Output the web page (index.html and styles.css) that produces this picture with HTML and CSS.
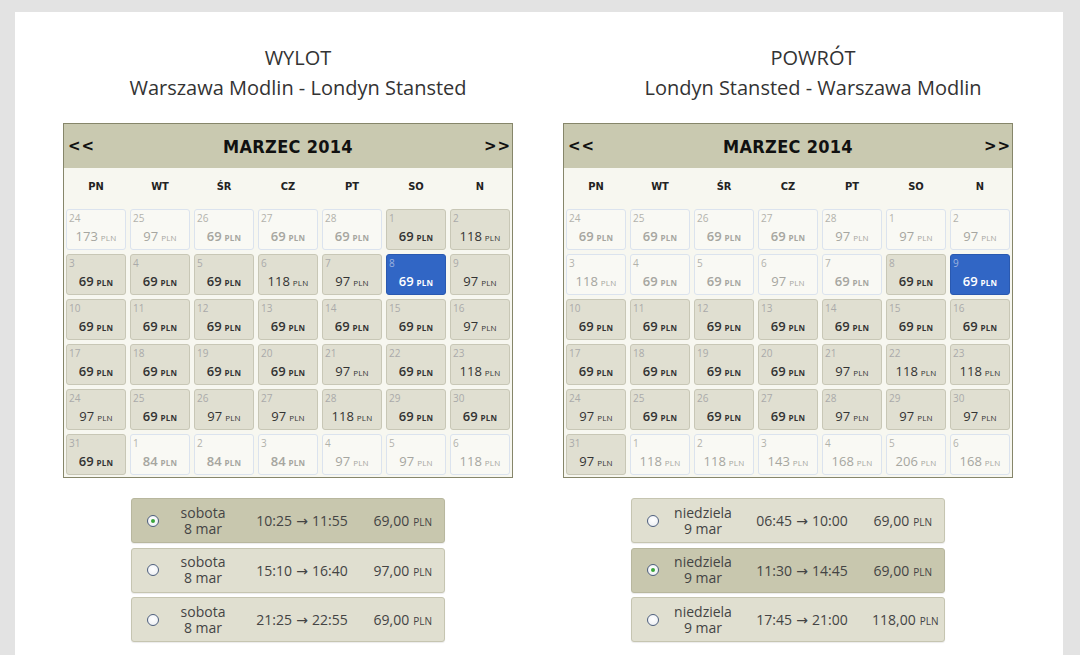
FILE: index.html
```html
<!DOCTYPE html>
<html lang="pl">
<head>
<meta charset="utf-8">
<title>Wybór lotu</title>
<link rel="stylesheet" href="styles.css">
</head>
<body>
<div class="panel">
  <div class="cols">
    <section class="col col-out">
      <h2 class="title">WYLOT<br>Warszawa Modlin - Londyn Stansted</h2>
      <div class="cal">
        <div class="cal-head"><span class="nav">&lt;&lt;</span><span class="month">MARZEC 2014</span><span class="nav">&gt;&gt;</span></div>
        <div class="wk"><span>PN</span><span>WT</span><span>ŚR</span><span>CZ</span><span>PT</span><span>SO</span><span>N</span></div>
        <div class="grid">
          <div class="d off"><span class="n">24</span><span class="p">173<small>PLN</small></span></div>
          <div class="d off"><span class="n">25</span><span class="p">97<small>PLN</small></span></div>
          <div class="d off b"><span class="n">26</span><span class="p">69<small>PLN</small></span></div>
          <div class="d off b"><span class="n">27</span><span class="p">69<small>PLN</small></span></div>
          <div class="d off b"><span class="n">28</span><span class="p">69<small>PLN</small></span></div>
          <div class="d b"><span class="n">1</span><span class="p">69<small>PLN</small></span></div>
          <div class="d"><span class="n">2</span><span class="p">118<small>PLN</small></span></div>

          <div class="d b"><span class="n">3</span><span class="p">69<small>PLN</small></span></div>
          <div class="d b"><span class="n">4</span><span class="p">69<small>PLN</small></span></div>
          <div class="d b"><span class="n">5</span><span class="p">69<small>PLN</small></span></div>
          <div class="d"><span class="n">6</span><span class="p">118<small>PLN</small></span></div>
          <div class="d"><span class="n">7</span><span class="p">97<small>PLN</small></span></div>
          <div class="d sel b"><span class="n">8</span><span class="p">69<small>PLN</small></span></div>
          <div class="d"><span class="n">9</span><span class="p">97<small>PLN</small></span></div>

          <div class="d b"><span class="n">10</span><span class="p">69<small>PLN</small></span></div>
          <div class="d b"><span class="n">11</span><span class="p">69<small>PLN</small></span></div>
          <div class="d b"><span class="n">12</span><span class="p">69<small>PLN</small></span></div>
          <div class="d b"><span class="n">13</span><span class="p">69<small>PLN</small></span></div>
          <div class="d b"><span class="n">14</span><span class="p">69<small>PLN</small></span></div>
          <div class="d b"><span class="n">15</span><span class="p">69<small>PLN</small></span></div>
          <div class="d"><span class="n">16</span><span class="p">97<small>PLN</small></span></div>

          <div class="d b"><span class="n">17</span><span class="p">69<small>PLN</small></span></div>
          <div class="d b"><span class="n">18</span><span class="p">69<small>PLN</small></span></div>
          <div class="d b"><span class="n">19</span><span class="p">69<small>PLN</small></span></div>
          <div class="d b"><span class="n">20</span><span class="p">69<small>PLN</small></span></div>
          <div class="d"><span class="n">21</span><span class="p">97<small>PLN</small></span></div>
          <div class="d b"><span class="n">22</span><span class="p">69<small>PLN</small></span></div>
          <div class="d"><span class="n">23</span><span class="p">118<small>PLN</small></span></div>

          <div class="d"><span class="n">24</span><span class="p">97<small>PLN</small></span></div>
          <div class="d b"><span class="n">25</span><span class="p">69<small>PLN</small></span></div>
          <div class="d"><span class="n">26</span><span class="p">97<small>PLN</small></span></div>
          <div class="d"><span class="n">27</span><span class="p">97<small>PLN</small></span></div>
          <div class="d"><span class="n">28</span><span class="p">118<small>PLN</small></span></div>
          <div class="d b"><span class="n">29</span><span class="p">69<small>PLN</small></span></div>
          <div class="d b"><span class="n">30</span><span class="p">69<small>PLN</small></span></div>

          <div class="d b"><span class="n">31</span><span class="p">69<small>PLN</small></span></div>
          <div class="d off b"><span class="n">1</span><span class="p">84<small>PLN</small></span></div>
          <div class="d off b"><span class="n">2</span><span class="p">84<small>PLN</small></span></div>
          <div class="d off b"><span class="n">3</span><span class="p">84<small>PLN</small></span></div>
          <div class="d off"><span class="n">4</span><span class="p">97<small>PLN</small></span></div>
          <div class="d off"><span class="n">5</span><span class="p">97<small>PLN</small></span></div>
          <div class="d off"><span class="n">6</span><span class="p">118<small>PLN</small></span></div>
        </div>
      </div>
      <div class="flights">
        <div class="fl active"><span class="radio on"></span><span class="day"><span class="ln">sobota</span><span class="ln">8 mar</span></span><span class="time">10:25 → 11:55</span><span class="price">69,00<small>PLN</small></span></div>
        <div class="fl"><span class="radio"></span><span class="day"><span class="ln">sobota</span><span class="ln">8 mar</span></span><span class="time">15:10 → 16:40</span><span class="price">97,00<small>PLN</small></span></div>
        <div class="fl"><span class="radio"></span><span class="day"><span class="ln">sobota</span><span class="ln">8 mar</span></span><span class="time">21:25 → 22:55</span><span class="price">69,00<small>PLN</small></span></div>
      </div>
    </section>

    <section class="col col-ret">
      <h2 class="title">POWRÓT<br>Londyn Stansted - Warszawa Modlin</h2>
      <div class="cal">
        <div class="cal-head"><span class="nav">&lt;&lt;</span><span class="month">MARZEC 2014</span><span class="nav">&gt;&gt;</span></div>
        <div class="wk"><span>PN</span><span>WT</span><span>ŚR</span><span>CZ</span><span>PT</span><span>SO</span><span>N</span></div>
        <div class="grid">
          <div class="d off b"><span class="n">24</span><span class="p">69<small>PLN</small></span></div>
          <div class="d off b"><span class="n">25</span><span class="p">69<small>PLN</small></span></div>
          <div class="d off b"><span class="n">26</span><span class="p">69<small>PLN</small></span></div>
          <div class="d off b"><span class="n">27</span><span class="p">69<small>PLN</small></span></div>
          <div class="d off"><span class="n">28</span><span class="p">97<small>PLN</small></span></div>
          <div class="d off"><span class="n">1</span><span class="p">97<small>PLN</small></span></div>
          <div class="d off"><span class="n">2</span><span class="p">97<small>PLN</small></span></div>

          <div class="d off"><span class="n">3</span><span class="p">118<small>PLN</small></span></div>
          <div class="d off b"><span class="n">4</span><span class="p">69<small>PLN</small></span></div>
          <div class="d off b"><span class="n">5</span><span class="p">69<small>PLN</small></span></div>
          <div class="d off"><span class="n">6</span><span class="p">97<small>PLN</small></span></div>
          <div class="d off b"><span class="n">7</span><span class="p">69<small>PLN</small></span></div>
          <div class="d b"><span class="n">8</span><span class="p">69<small>PLN</small></span></div>
          <div class="d sel b"><span class="n">9</span><span class="p">69<small>PLN</small></span></div>

          <div class="d b"><span class="n">10</span><span class="p">69<small>PLN</small></span></div>
          <div class="d b"><span class="n">11</span><span class="p">69<small>PLN</small></span></div>
          <div class="d b"><span class="n">12</span><span class="p">69<small>PLN</small></span></div>
          <div class="d b"><span class="n">13</span><span class="p">69<small>PLN</small></span></div>
          <div class="d b"><span class="n">14</span><span class="p">69<small>PLN</small></span></div>
          <div class="d b"><span class="n">15</span><span class="p">69<small>PLN</small></span></div>
          <div class="d b"><span class="n">16</span><span class="p">69<small>PLN</small></span></div>

          <div class="d b"><span class="n">17</span><span class="p">69<small>PLN</small></span></div>
          <div class="d b"><span class="n">18</span><span class="p">69<small>PLN</small></span></div>
          <div class="d b"><span class="n">19</span><span class="p">69<small>PLN</small></span></div>
          <div class="d b"><span class="n">20</span><span class="p">69<small>PLN</small></span></div>
          <div class="d"><span class="n">21</span><span class="p">97<small>PLN</small></span></div>
          <div class="d"><span class="n">22</span><span class="p">118<small>PLN</small></span></div>
          <div class="d"><span class="n">23</span><span class="p">118<small>PLN</small></span></div>

          <div class="d"><span class="n">24</span><span class="p">97<small>PLN</small></span></div>
          <div class="d b"><span class="n">25</span><span class="p">69<small>PLN</small></span></div>
          <div class="d b"><span class="n">26</span><span class="p">69<small>PLN</small></span></div>
          <div class="d b"><span class="n">27</span><span class="p">69<small>PLN</small></span></div>
          <div class="d"><span class="n">28</span><span class="p">97<small>PLN</small></span></div>
          <div class="d"><span class="n">29</span><span class="p">97<small>PLN</small></span></div>
          <div class="d"><span class="n">30</span><span class="p">97<small>PLN</small></span></div>

          <div class="d"><span class="n">31</span><span class="p">97<small>PLN</small></span></div>
          <div class="d off"><span class="n">1</span><span class="p">118<small>PLN</small></span></div>
          <div class="d off"><span class="n">2</span><span class="p">118<small>PLN</small></span></div>
          <div class="d off"><span class="n">3</span><span class="p">143<small>PLN</small></span></div>
          <div class="d off"><span class="n">4</span><span class="p">168<small>PLN</small></span></div>
          <div class="d off"><span class="n">5</span><span class="p">206<small>PLN</small></span></div>
          <div class="d off"><span class="n">6</span><span class="p">168<small>PLN</small></span></div>
        </div>
      </div>
      <div class="flights">
        <div class="fl"><span class="radio"></span><span class="day"><span class="ln">niedziela</span><span class="ln">9 mar</span></span><span class="time">06:45 → 10:00</span><span class="price">69,00<small>PLN</small></span></div>
        <div class="fl active"><span class="radio on"></span><span class="day"><span class="ln">niedziela</span><span class="ln">9 mar</span></span><span class="time">11:30 → 14:45</span><span class="price">69,00<small>PLN</small></span></div>
        <div class="fl"><span class="radio"></span><span class="day"><span class="ln">niedziela</span><span class="ln">9 mar</span></span><span class="time">17:45 → 21:00</span><span class="price">118,00<small>PLN</small></span></div>
      </div>
    </section>
  </div>
</div>
</body>
</html>
```

FILE: styles.css
```css
html, body {
  margin: 0;
  padding: 0;
  background: #e3e3e3;
  height: 100%;
  overflow: hidden;
}

body {
  font-family: "Open Sans", "DejaVu Sans", sans-serif;
  color: #333;
}

.panel {
  margin: 12px 0 0 15px;
  width: 1048px;
  min-height: 700px;
  background: #fff;
  box-sizing: border-box;
  padding: 31px 0 0 48px;
}

.cols {
  display: flex;
  gap: 30px;
}

.col-out { width: 470px; }
.col-ret { width: 500px; }

.title {
  margin: 0 0 20px;
  font-size: 20px;
  line-height: 30px;
  font-weight: normal;
  text-align: center;
  color: #333;
}

.cal {
  width: 450px;
  border: 1px solid #86866a;
  background: #f7f7f0;
  box-sizing: border-box;
}

.cal-head {
  height: 44px;
  background: #c9c9b0;
  display: flex;
  align-items: center;
  justify-content: space-between;
  padding: 0 4px 0 4px;
  font-family: "DejaVu Sans", "Liberation Sans", sans-serif;
  font-weight: bold;
  color: #111;
}

.nav {
  font-size: 15px;
  letter-spacing: 1px;
  width: 24px;
}
.nav:last-child { text-align: right; }

.month {
  font-size: 18px;
  font-stretch: condensed;
  letter-spacing: 0.3px;
}

.wk {
  display: grid;
  grid-template-columns: repeat(7, 60px);
  column-gap: 4px;
  padding: 0 2px;
  height: 37px;
  align-items: center;
  margin-bottom: 4px;
  font-family: "DejaVu Sans", "Liberation Sans", sans-serif;
  font-stretch: condensed;
  font-weight: bold;
  font-size: 11px;
  color: #222;
  text-align: center;
}

.grid {
  display: grid;
  grid-template-columns: repeat(7, 60px);
  grid-auto-rows: 41px;
  gap: 4px;
  padding: 0 2px 2px;
}

.d {
  box-sizing: border-box;
  border: 1px solid #c8c7b6;
  border-radius: 3px;
  background: #e0dfd1;
  color: #333;
  text-align: center;
}

.d.off {
  background: #f9f9f4;
  border-color: #dbe3ee;
  color: #a6a6a0;
}

.d.sel {
  background: #3166c5;
  border-color: #2a59b0;
  color: #fff;
}

.n {
  display: block;
  text-align: left;
  font-size: 10px;
  line-height: 12px;
  padding: 2px 0 0 2px;
  color: #aaa;
}
.d.sel .n { color: #9db3de; }
.d.off .n { color: #b2b2ac; }

.p {
  display: block;
  margin-top: 4px;
  font-size: 13px;
  line-height: 16px;
}
.p small {
  font-size: 8px;
  margin-left: 3px;
  font-weight: normal;
  letter-spacing: 0.2px;
}
.d.b .p { font-weight: 600; }
.d.b .p small { font-weight: 700; }

.flights {
  width: 450px;
  margin-top: 20px;
  display: flex;
  flex-direction: column;
  align-items: center;
  gap: 4.5px;
}

.fl {
  box-sizing: border-box;
  width: 314px;
  height: 45px;
  border: 1px solid #c6c5b1;
  border-radius: 3px;
  background: #e0dfd0;
  display: grid;
  grid-template-columns: 42px 58px 140px 1fr;
  align-items: center;
  padding-right: 12px;
  font-size: 14px;
  color: #444;
  box-shadow: 0 1px 1px rgba(0,0,0,0.08);
}

.fl.active {
  background: #c8c7ae;
  border-color: #b8b79e;
}

.radio {
  justify-self: center;
  width: 10px;
  height: 10px;
  border: 1px solid #4e5f7e;
  border-radius: 50%;
  background: radial-gradient(circle at 50% 40%, #ffffff 0%, #e9ecf1 100%);
  position: relative;
}
.radio.on::after {
  content: "";
  position: absolute;
  left: 3px;
  top: 3px;
  width: 4px;
  height: 4px;
  border-radius: 50%;
  background: #3aa53a;
}

.day {
  display: flex;
  flex-direction: column;
  align-items: center;
  white-space: nowrap;
}
.ln {
  display: block;
  height: 16px;
  line-height: 16px;
}

.time {
  text-align: center;
  word-spacing: 0.5px;
}

.price {
  text-align: right;
}
.price small {
  font-size: 10px;
  margin-left: 4px;
}
```
